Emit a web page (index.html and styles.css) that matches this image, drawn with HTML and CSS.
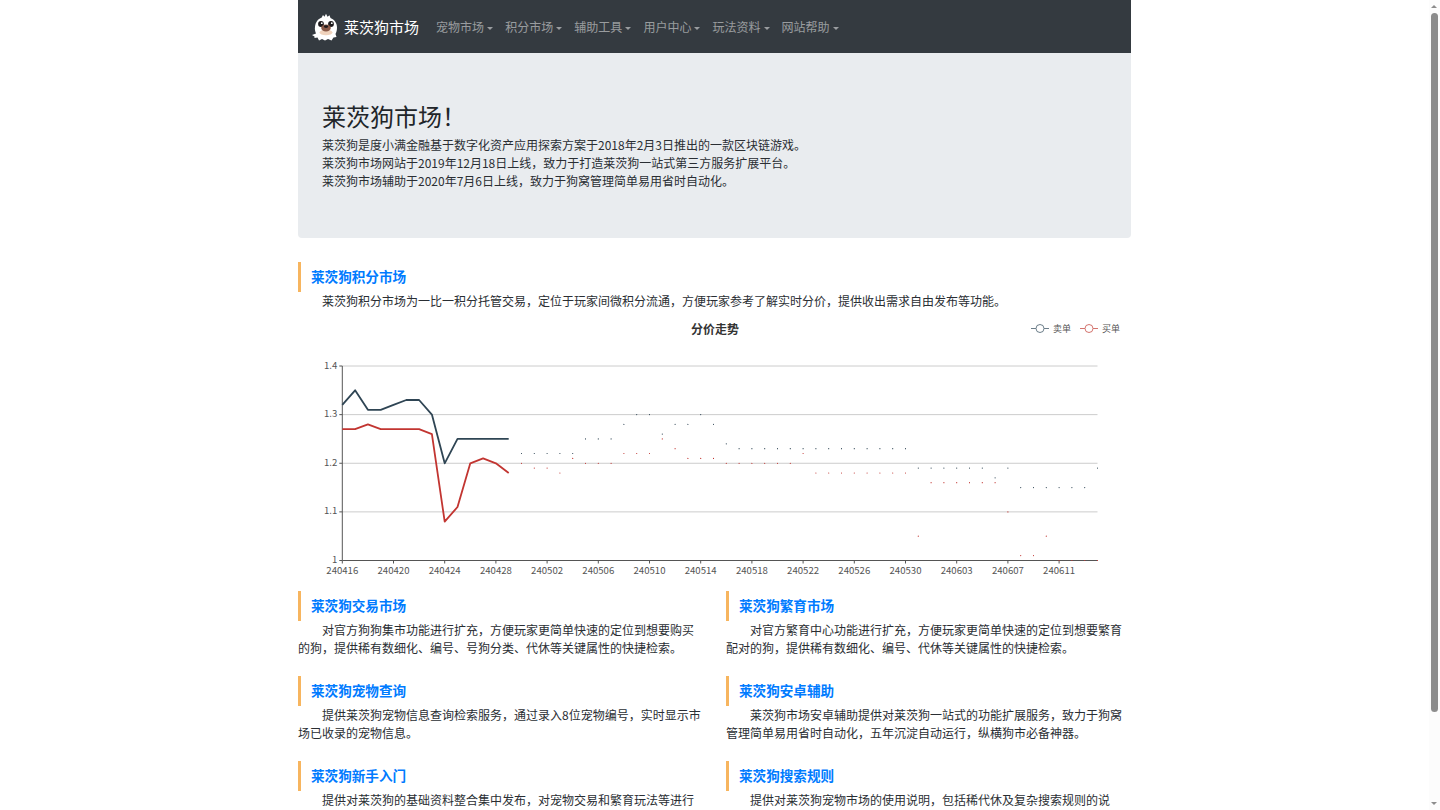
FILE: index.html
```html
<!DOCTYPE html>
<html lang="zh-CN">
<head>
<meta charset="utf-8">
<title>莱茨狗市场</title>
<link rel="stylesheet" href="styles.css">
</head>
<body>
<div class="viewport">
  <div class="page">
    <div class="container">
      <nav class="navbar">
        <a class="brand">
          <svg class="logo" viewBox="0 0 30 28" width="30" height="28">
            <path class="logo-fur" d="M1 22 L5 20.5 C4 18 3.6 16 4 14 C4.5 9 7 6 10.5 4.8 L12 2 L13.5 3.8 L15 .8 L16.5 3.8 L18.5 2.2 L19.5 5 C23.5 6.5 26 10 26 14.5 C26 17 25.5 19 24.5 21 L25.5 24 L22.5 24.5 L20.5 27.5 L17 26 L14 27.5 L11 26 L8 27.5 L6.5 24.5 L3.5 25 L3.5 23.5 Z"/>
            <ellipse class="logo-eye" cx="10" cy="11" rx="2.9" ry="3"/>
            <ellipse class="logo-eye" cx="20" cy="11" rx="2.9" ry="3"/>
            <circle class="logo-fur" cx="10.8" cy="10.2" r=".9"/>
            <circle class="logo-fur" cx="20.8" cy="10.2" r=".9"/>
            <ellipse class="logo-chest" cx="15" cy="19.5" rx="6.5" ry="2.8"/>
            <ellipse class="logo-muzzle" cx="15" cy="15" rx="4.8" ry="3.4"/>
            <ellipse class="logo-eye" cx="15" cy="13.6" rx="2.2" ry="1.4"/>
          </svg>
          <span>莱茨狗市场</span>
        </a>
        <ul class="nav-list">
          <li class="nav-link">宠物市场</li>
          <li class="nav-link">积分市场</li>
          <li class="nav-link">辅助工具</li>
          <li class="nav-link">用户中心</li>
          <li class="nav-link">玩法资料</li>
          <li class="nav-link">网站帮助</li>
        </ul>
      </nav>

      <header class="hero">
        <h1 class="hero-title">莱茨狗市场！</h1>
        <p class="hero-line">莱茨狗是度小满金融基于数字化资产应用探索方案于2018年2月3日推出的一款区块链游戏。</p>
        <p class="hero-line">莱茨狗市场网站于2019年12月18日上线，致力于打造莱茨狗一站式第三方服务扩展平台。</p>
        <p class="hero-line">莱茨狗市场辅助于2020年7月6日上线，致力于狗窝管理简单易用省时自动化。</p>
      </header>

      <section class="market">
        <h2 class="sec-title">莱茨狗积分市场</h2>
        <p class="sec-text">莱茨狗积分市场为一比一积分托管交易，定位于玩家间微积分流通，方便玩家参考了解实时分价，提供收出需求自由发布等功能。</p>
        <svg id="chart" class="chart" viewBox="0 0 833 281" width="833" height="281"></svg>
      </section>

      <section class="features">
        <article class="feature">
          <h2 class="sec-title">莱茨狗交易市场</h2>
          <p class="sec-text">对官方狗狗集市功能进行扩充，方便玩家更简单快速的定位到想要购买的狗，提供稀有数细化、编号、号狗分类、代休等关键属性的快捷检索。</p>
        </article>
        <article class="feature">
          <h2 class="sec-title">莱茨狗繁育市场</h2>
          <p class="sec-text">对官方繁育中心功能进行扩充，方便玩家更简单快速的定位到想要繁育配对的狗，提供稀有数细化、编号、代休等关键属性的快捷检索。</p>
        </article>
        <article class="feature">
          <h2 class="sec-title">莱茨狗宠物查询</h2>
          <p class="sec-text">提供莱茨狗宠物信息查询检索服务，通过录入8位宠物编号，实时显示市场已收录的宠物信息。</p>
        </article>
        <article class="feature">
          <h2 class="sec-title">莱茨狗安卓辅助</h2>
          <p class="sec-text">莱茨狗市场安卓辅助提供对莱茨狗一站式的功能扩展服务，致力于狗窝管理简单易用省时自动化，五年沉淀自动运行，纵横狗市必备神器。</p>
        </article>
        <article class="feature">
          <h2 class="sec-title">莱茨狗新手入门</h2>
          <p class="sec-text">提供对莱茨狗的基础资料整合集中发布，对宠物交易和繁育玩法等进行</p>
        </article>
        <article class="feature">
          <h2 class="sec-title">莱茨狗搜索规则</h2>
          <p class="sec-text">提供对莱茨狗宠物市场的使用说明，包括稀代休及复杂搜索规则的说</p>
        </article>
      </section>
    </div>
  </div>
  <aside class="scrollbar">
    <span class="arrow arrow-up"></span>
    <span class="thumb"></span>
    <span class="arrow arrow-down"></span>
  </aside>
</div>
<script src="chart.js"></script>
</body>
</html>
```
FILE: styles.css
```css
* { box-sizing: border-box; }
html, body { margin: 0; padding: 0; }
body {
  background: #fff;
  color: #2a2e33;
  font-family: "Noto Sans CJK SC", "Liberation Sans", sans-serif;
  font-size: 12px;
  line-height: 18px;
}
.viewport { display: flex; height: 810px; overflow: hidden; }
.page { flex: 1; min-width: 0; overflow: hidden; }
.container { width: 833px; margin: 0 auto; }

.navbar {
  display: flex;
  align-items: center;
  height: 53px;
  padding-left: 13px;
  background: #343a40;
}
.brand {
  display: flex;
  align-items: center;
  gap: 3px;
  color: #fff;
  font-size: 15px;
  margin-right: 11px;
}
.logo { display: block; }
.logo-fur { fill: #fff; }
.logo-eye { fill: #1d1a1c; }
.logo-muzzle { fill: #8a5a48; }
.logo-chest { fill: #f0d3bd; }
.nav-list {
  display: flex;
  list-style: none;
  margin: 0;
  padding: 0;
}
.nav-link {
  padding: 0 6.05px;
  color: rgba(255, 255, 255, .5);
}
.nav-link::after {
  content: "";
  display: inline-block;
  margin-left: 3px;
  vertical-align: 2px;
  border-top: 3.6px solid;
  border-left: 3.6px solid transparent;
  border-right: 3.6px solid transparent;
}

.hero {
  height: 185px;
  padding: 47px 24px 48px;
  background: #e9ecef;
  border-radius: 0 0 4px 4px;
}
.hero-title {
  margin: 0;
  height: 36px;
  font-size: 24px;
  font-weight: 400;
  line-height: 32px;
  color: #212529;
}
.hero-line { margin: 0; }

.market { margin-top: 24px; }
.sec-title {
  margin: 0;
  height: 30px;
  padding-left: 10px;
  border-left: 3px solid #f7b55f;
  color: #007bff;
  font-size: 13.6px;
  font-weight: 700;
  line-height: 28px;
}
.sec-text { margin: 0; text-indent: 24px; }
.chart { display: block; }

.features {
  display: grid;
  grid-template-columns: 405px 405px;
  column-gap: 23px;
}
.feature { height: 85px; }

.scrollbar {
  position: relative;
  flex: none;
  width: 11px;
  height: 810px;
  background: #fcfcfc;
}
.thumb {
  position: absolute;
  left: 2px;
  top: 13px;
  width: 7px;
  height: 699px;
  border-radius: 3.5px;
  background: #8c8c8c;
}
.arrow {
  position: absolute;
  left: 2px;
  width: 0;
  height: 0;
  border-left: 3.5px solid transparent;
  border-right: 3.5px solid transparent;
}
.arrow-up { top: 5px; border-bottom: 3px solid #8c8c8c; }
.arrow-down { bottom: 5px; border-top: 3px solid #8c8c8c; }

.grid-line { stroke: #ccc; stroke-width: 1; }
.axis-line { stroke: #555; stroke-width: 1; fill: none; }
.axis-label { fill: #555; font-size: 9.6px; }
.chart-title { fill: #333; font-size: 12px; font-weight: 700; }
.legend-label { fill: #555; font-size: 9px; }
.series { fill: none; stroke-width: 1.8; stroke-linejoin: round; }
.sell { stroke: #2f4554; }
.buy { stroke: #c23531; }
.dot { fill: none; stroke-width: 1.2; stroke-linecap: round; }
.legend-ring { fill: #fff; stroke-width: 1; }
.legend-line { stroke-width: 1; }
.legend-sell { stroke: #6e7f8b; }
.legend-buy { stroke: #d4756f; }
```
FILE: chart.js
```js
(function () {
  var svg = document.getElementById('chart');
  var NS = 'http://www.w3.org/2000/svg';
  var X0 = 44.3, STEP = 12.8, Y_TOP = 56, Y_BOT = 250.5;

  function el(name, attrs, text) {
    var node = document.createElementNS(NS, name);
    for (var key in attrs) node.setAttribute(key, attrs[key]);
    if (text !== undefined) node.textContent = text;
    svg.appendChild(node);
    return node;
  }
  function px(i) { return X0 + i * STEP; }
  function py(v) { return Y_BOT - (v - 1) * (Y_BOT - Y_TOP) / 0.4; }

  var sell = [1.32, 1.35, 1.31, 1.31, 1.32, 1.33, 1.33, 1.30, 1.20, 1.25, 1.25, 1.25, 1.25, 1.25,
    1.22, 1.22, 1.22, 1.22, 1.22, 1.25, 1.25, 1.25, 1.28, 1.30, 1.30, 1.26, 1.28, 1.28, 1.30, 1.28,
    1.24, 1.23, 1.23, 1.23, 1.23, 1.23, 1.23, 1.23, 1.23, 1.23, 1.23, 1.23, 1.23, 1.23, 1.23,
    1.19, 1.19, 1.19, 1.19, 1.19, 1.19, 1.17, 1.19, 1.15, 1.15, 1.15, 1.15, 1.15, 1.15, 1.19];
  var buy = [1.27, 1.27, 1.28, 1.27, 1.27, 1.27, 1.27, 1.26, 1.08, 1.11, 1.20, 1.21, 1.20, 1.18,
    1.20, 1.19, 1.19, 1.18, 1.21, 1.20, 1.20, 1.20, 1.22, 1.22, 1.22, 1.25, 1.23, 1.21, 1.21, 1.21,
    1.20, 1.20, 1.20, 1.20, 1.20, 1.20, 1.22, 1.18, 1.18, 1.18, 1.18, 1.18, 1.18, 1.18, 1.18,
    1.05, 1.16, 1.16, 1.16, 1.16, 1.16, 1.16, 1.10, 1.01, 1.01, 1.05, 1.00, 1.00, 1.00, 1.00];

  // Category labels: daily from 2024-04-16, one label every four days.
  function dateLabel(i) {
    var d = new Date(Date.UTC(2024, 3, 16 + i));
    var m = d.getUTCMonth() + 1, day = d.getUTCDate();
    return '24' + (m < 10 ? '0' : '') + m + (day < 10 ? '0' : '') + day;
  }

  ['1', '1.1', '1.2', '1.3', '1.4'].forEach(function (label) {
    var y = py(parseFloat(label));
    if (label !== '1') el('line', { 'class': 'grid-line', x1: X0, x2: px(59), y1: y, y2: y });
    el('line', { 'class': 'axis-line', x1: X0 - 3, x2: X0, y1: y, y2: y });
    el('text', { 'class': 'axis-label', x: X0 - 5, y: y + 2.5, 'text-anchor': 'end' }, label);
  });

  el('line', { 'class': 'axis-line', x1: X0, x2: X0, y1: Y_TOP, y2: Y_BOT });
  el('line', { 'class': 'axis-line', x1: X0, x2: px(59), y1: Y_BOT, y2: Y_BOT });
  for (var i = 0; i < 60; i += 4) {
    el('line', { 'class': 'axis-line', x1: px(i), x2: px(i), y1: Y_BOT, y2: Y_BOT + 3 });
    el('text', { 'class': 'axis-label', x: px(i), y: Y_BOT + 13, 'text-anchor': 'middle' }, dateLabel(i));
  }

  function draw(values, cls) {
    var pts = [];
    for (var i = 0; i < 14; i++) pts.push(px(i).toFixed(1) + ',' + py(values[i]).toFixed(1));
    el('polyline', { 'class': 'series ' + cls, points: pts.join(' ') });
    var d = '';
    for (var j = 14; j < values.length; j++) d += 'M' + px(j).toFixed(1) + ' ' + py(values[j]).toFixed(1) + 'h0';
    el('path', { 'class': 'dot ' + cls, d: d });
  }
  draw(sell, 'sell');
  draw(buy, 'buy');

  el('text', { 'class': 'chart-title', x: 417, y: 24, 'text-anchor': 'middle' }, '分价走势');

  function legend(x, cls, label) {
    el('line', { 'class': 'legend-line legend-' + cls, x1: x, x2: x + 18, y1: 18.5, y2: 18.5 });
    el('circle', { 'class': 'legend-ring legend-' + cls, cx: x + 9, cy: 18.5, r: 4 });
    el('text', { 'class': 'legend-label', x: x + 22, y: 21.5 }, label);
  }
  legend(733, 'sell', '卖单');
  legend(782, 'buy', '买单');
})();
```
